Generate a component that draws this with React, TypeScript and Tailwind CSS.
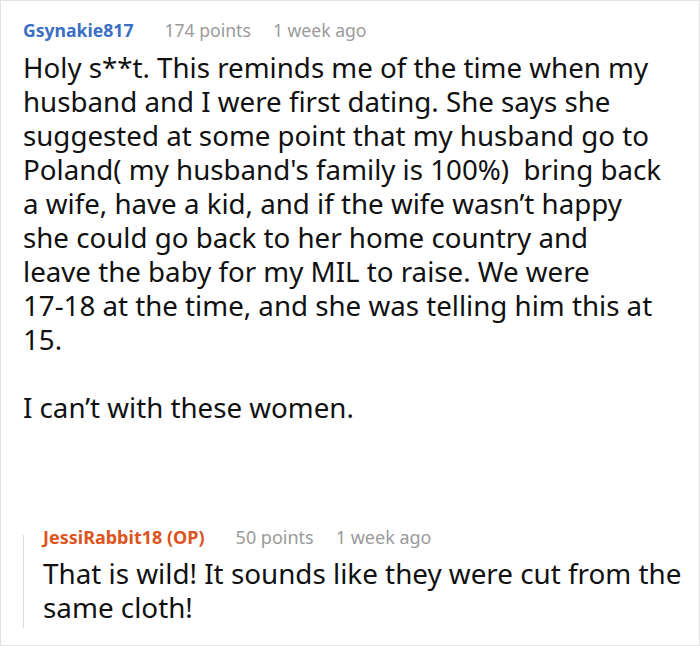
type CommentProps = {
    author: string;
    authorClass: string;
    points: string;
    time: string;
    sizeClass: string;
};

function CommentHeader({ author, authorClass, points, time, sizeClass }: CommentProps) {
    return (
        <div className={`flex items-baseline whitespace-nowrap leading-[24px] ${sizeClass}`}>
            <span className={`font-bold ${authorClass}`}>{author}</span>
            <span className="ml-[31px] text-[#9a9a9a]">{points}</span>
            <span className="ml-[22px] text-[#9a9a9a]">{time}</span>
        </div>
    );
}

export default function App() {
    return (
        <div
            className="w-[700px] h-[646px] overflow-hidden border border-[#e3e3e3] bg-white"
            style={{ fontFamily: '"Noto Sans", "Open Sans", sans-serif' }}
        >
            <div className="pl-[22px] pt-[17px]">
                <CommentHeader
                    author="Gsynakie817"
                    authorClass="text-[#3a6fc4]"
                    points="174 points"
                    time="1 week ago"
                    sizeClass="text-[17.6px]"
                />
                <div className="mt-[8px] whitespace-nowrap text-[27.7px] leading-[34px] text-[#111]">
                    <p>
                        Holy s**t. This reminds me of the time when my
                        <br />
                        husband and I were first dating. She says she
                        <br />
                        suggested at some point that my husband go to
                        <br />
                        Poland( my husband's family is 100%){'\u00a0'} bring back
                        <br />
                        a wife, have a kid, and if the wife wasn’t happy
                        <br />
                        she could go back to her home country and
                        <br />
                        leave the baby for my MIL to raise. We were
                        <br />
                        17-18 at the time, and she was telling him this at
                        <br />
                        15.
                    </p>
                    <p className="mt-[34px]">I can’t with these women.</p>
                </div>

                {/* reply */}
                <div className="mt-[101px] flex">
                    <div className="mt-[10px] mb-[-4px] w-px shrink-0 bg-[#dcdcdc]" />
                    <div className="pl-[19px]">
                        <CommentHeader
                            author="JessiRabbit18 (OP)"
                            authorClass="text-[#dc5420]"
                            points="50 points"
                            time="1 week ago"
                            sizeClass="text-[18px]"
                        />
                        <p className="mt-[7px] whitespace-nowrap text-[27.8px] leading-[34px] text-[#111]">
                            That is wild! It sounds like they were cut from the
                            <br />
                            same cloth!
                        </p>
                    </div>
                </div>
            </div>
        </div>
    );
}
